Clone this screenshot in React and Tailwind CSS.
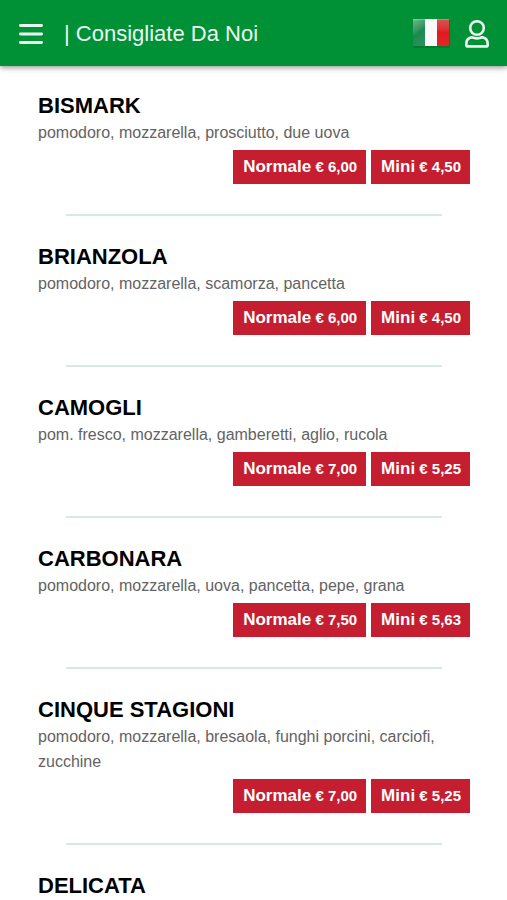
import React from "react";

const pizzas = [
  {
    name: "BISMARK",
    toppings: "pomodoro, mozzarella, prosciutto, due uova",
    normale: "6,00",
    mini: "4,50",
  },
  {
    name: "BRIANZOLA",
    toppings: "pomodoro, mozzarella, scamorza, pancetta",
    normale: "6,00",
    mini: "4,50",
  },
  {
    name: "CAMOGLI",
    toppings: "pom. fresco, mozzarella, gamberetti, aglio, rucola",
    normale: "7,00",
    mini: "5,25",
  },
  {
    name: "CARBONARA",
    toppings: "pomodoro, mozzarella, uova, pancetta, pepe, grana",
    normale: "7,50",
    mini: "5,63",
  },
  {
    name: "CINQUE STAGIONI",
    toppings:
      "pomodoro, mozzarella, bresaola, funghi porcini, carciofi, zucchine",
    normale: "7,00",
    mini: "5,25",
  },
  { name: "DELICATA" },
];

function MenuIcon() {
  return (
    <svg width="24" height="22" viewBox="0 0 24 22" aria-hidden="true">
      <path
        d="M1.4 2.5h21.2M1.4 11h21.2M1.4 19.5h21.2"
        stroke="#e9f7ee"
        strokeWidth="2.8"
        strokeLinecap="round"
      />
    </svg>
  );
}

function UserIcon() {
  return (
    <svg
      width="26"
      height="30"
      viewBox="0 0 26 30"
      fill="none"
      stroke="#ecf8f0"
      strokeWidth="2.6"
      strokeLinejoin="round"
      aria-hidden="true"
    >
      <circle cx="13" cy="9" r="6.8" />
      <path d="M7.6 18.2C4.4 18.8 2.3 21.5 2.3 25v.9c0 .9.6 1.5 1.5 1.5h18.4c.9 0 1.5-.6 1.5-1.5V25c0-3.5-2.1-6.2-5.3-6.8-1.6.8-3.4 1.2-5.4 1.2s-3.8-.4-5.4-1.2z" />
    </svg>
  );
}

function ItalianFlag() {
  return (
    <svg width="38" height="30" viewBox="0 0 38 30" aria-hidden="true">
      <defs>
        <linearGradient id="flagGreen" x1="0" y1="0" x2="0.3" y2="1">
          <stop offset="0" stopColor="#72b78c" />
          <stop offset="0.45" stopColor="#389863" />
          <stop offset="0.6" stopColor="#1c8950" />
          <stop offset="1" stopColor="#279059" />
        </linearGradient>
        <linearGradient id="flagRed" x1="0" y1="0" x2="0" y2="1">
          <stop offset="0" stopColor="#d9534f" />
          <stop offset="0.35" stopColor="#de3535" />
          <stop offset="0.5" stopColor="#dc1a20" />
          <stop offset="1" stopColor="#e4262b" />
        </linearGradient>
      </defs>
      <rect x="1" y="1" width="37" height="28" rx="1" fill="#04652a" opacity="0.5" />
      <rect x="1" y="0" width="12" height="27" fill="url(#flagGreen)" />
      <rect x="13" y="0" width="12" height="27" fill="#fafafa" />
      <rect x="25" y="0" width="12" height="27" fill="url(#flagRed)" />
      <rect x="1" y="0" width="36" height="1" fill="#ffffff" opacity="0.25" />
    </svg>
  );
}

function PriceButton({ label, price }) {
  return (
    <button
      type="button"
      className="h-[34px] bg-[#c41e30] pr-[9px] pl-[10px] text-[17px] leading-[34px] font-bold whitespace-nowrap text-white"
    >
      {label}
      <span className="text-[15px]"> € {price}</span>
    </button>
  );
}

function PizzaItem({ pizza }) {
  return (
    <li>
      <h2 className="text-[22px] leading-[28px] font-bold text-black">
        {pizza.name}
      </h2>
      {pizza.toppings && (
        <>
          <p className="text-base leading-[25px] text-[#636363]">
            {pizza.toppings}
          </p>
          <div className="mt-[5px] flex justify-end gap-[5px]">
            <PriceButton label="Normale" price={pizza.normale} />
            <PriceButton label="Mini" price={pizza.mini} />
          </div>
          <hr className="mx-7 mt-[30px] mb-[27px] border-t-2 border-[#d5ebe2]" />
        </>
      )}
    </li>
  );
}

export default function App() {
  return (
    <div className="h-screen overflow-hidden bg-white font-['Liberation_Sans',Arial,sans-serif]">
      {/* Header */}
      <header className="flex h-[66px] items-center bg-[#009036] pt-[2px] pr-[17px] pl-[19px] shadow-[0_1px_6px_rgba(0,0,0,0.5)]">
        <button type="button" aria-label="Menu">
          <MenuIcon />
        </button>
        <h1 className="ml-[21px] flex-1 text-[22px] leading-7 text-[#ecf8f0]">
          | Consigliate Da Noi
        </h1>
        <button type="button" aria-label="Italiano">
          <ItalianFlag />
        </button>
        <button type="button" aria-label="Account" className="ml-[14px]">
          <UserIcon />
        </button>
      </header>

      {/* Pizza list */}
      <main className="pt-[26px] pr-[37px] pl-[38px]">
        <ul>
          {pizzas.map((pizza) => (
            <PizzaItem key={pizza.name} pizza={pizza} />
          ))}
        </ul>
      </main>
    </div>
  );
}
